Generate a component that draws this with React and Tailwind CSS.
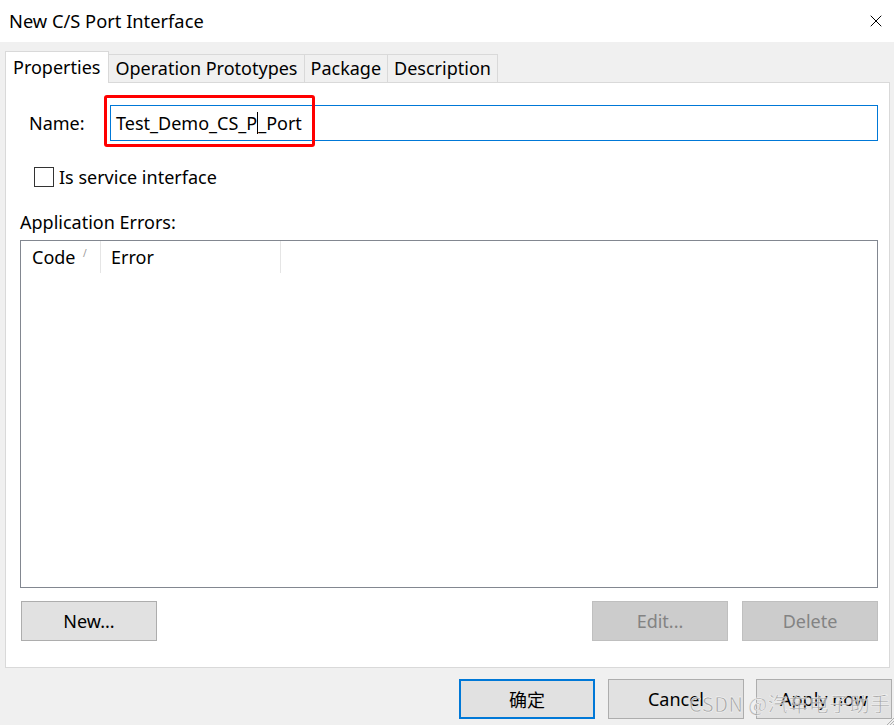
import { X } from 'lucide-react';

const font = { fontFamily: '"Noto Sans", "Noto Sans CJK SC", sans-serif' };

function Tab({ label, active }) {
  if (active) {
    return (
      <div className="h-[32px] pl-[7px] pr-[8px] flex items-center bg-white border border-b-0 border-[#d9d9d9] relative z-10 -mb-px">
        {label}
      </div>
    );
  }
  return (
    <div className="h-[28px] px-[6px] flex items-center bg-[#f0f0f0] border border-l-0 border-b-0 border-[#d9d9d9]">
      {label}
    </div>
  );
}

function Btn({ children, disabled, primary, className = '' }) {
  const base = 'w-[136px] h-[40px] flex items-center justify-center';
  if (disabled) {
    return <div className={`${base} bg-[#cccccc] border border-[#bfbfbf] text-[#838383] ${className}`}>{children}</div>;
  }
  if (primary) {
    return <div className={`${base} bg-[#e1e1e1] border-2 border-[#0078d7] ${className}`}>{children}</div>;
  }
  return <div className={`${base} bg-[#e1e1e1] border border-[#adadad] ${className}`}>{children}</div>;
}

export default function App() {
  return (
    <div className="w-[894px] h-[725px] bg-[#f0f0f0] relative overflow-hidden text-[18px] text-black" style={font}>
      {/* title bar */}
      <div className="h-[42px] bg-white flex items-center justify-between pl-[9px] pr-[8px]">
        <span className="text-[18.3px]">New C/S Port Interface</span>
        <X size={20} strokeWidth={1.2} className="text-black" />
      </div>

      <div className="px-[5px] pt-[9px]">
        {/* tabs */}
        <div className="flex items-end h-[31px]">
          <Tab label="Properties" active />
          <Tab label="Operation Prototypes" />
          <Tab label="Package" />
          <Tab label="Description" />
        </div>

        {/* panel */}
        <div className="w-[885px] h-[586px] bg-white border border-[#d9d9d9] pl-[14px] pr-[11px] flex flex-col">
          <div className="flex items-center mt-[22px] h-[36px]">
            <span className="ml-[9px] w-[81px]">Name:</span>
            <div className="flex-1 h-[36px] border border-[#0078d7] flex items-center pl-[5px]">
              <span>Test_Demo_CS_P</span>
              <span className="w-px h-[22px] bg-black"></span>
              <span>_Port</span>
            </div>
          </div>

          <div className="flex items-center mt-[26px] ml-[14px] h-[20px]">
            <div className="w-[20px] h-[20px] border border-[#333333] bg-white"></div>
            <span className="ml-[5px]">Is service interface</span>
          </div>

          <div className="mt-[23px] h-[24px] flex items-center">Application Errors:</div>

          <div className="mt-[6px] h-[348px] border border-[#828790] bg-white">
            <div className="flex h-[32px] items-center">
              <div className="w-[80px] pl-[11px] flex items-center h-full border-r border-[#e5e5e5] relative">
                Code<span className="absolute left-[62px] top-[5px] text-[10px] text-[#999]">/</span>
              </div>
              <div className="w-[180px] pl-[10px] flex items-center h-full border-r border-[#e5e5e5]">Error</div>
            </div>
          </div>

          <div className="flex mt-[13px] pl-px">
            <Btn>New...</Btn>
            <div className="flex-1"></div>
            <Btn disabled>Edit...</Btn>
            <Btn disabled className="ml-[14px]">Delete</Btn>
          </div>
        </div>
      </div>

      {/* bottom buttons */}
      <div className="flex justify-end gap-[12px] mt-[11px] pr-[2px]">
        <Btn primary className="h-[39px] mr-px"><span style={{ fontFamily: '"Noto Sans CJK SC", sans-serif' }}>确定</span></Btn>
        <Btn className="h-[39px]">Cancel</Btn>
        <Btn className="h-[39px]">Apply now</Btn>
      </div>

      {/* highlight box */}
      <div className="absolute left-[104px] top-[95px] w-[211px] h-[52px] border-[3px] border-[#ff0000] rounded-[3px]"></div>

      {/* watermark */}
      <div
        className="absolute left-[689px] top-[689px] text-[20px] text-[#9a9a9a]/85 tracking-[0.5px] pointer-events-none"
        style={{ fontFamily: '"Noto Sans CJK SC", sans-serif', WebkitTextStroke: '0.4px #ffffff' }}
      >
        CSDN @汽车电子助手
      </div>

      {/* resize grip */}
      <svg className="absolute right-0 bottom-0" width="10" height="10" viewBox="0 0 10 10">
        <path d="M10 3 L3 10 M10 6 L6 10 M10 9 L9 10" stroke="#b0b0b0" strokeWidth="1" />
      </svg>
    </div>
  );
}
